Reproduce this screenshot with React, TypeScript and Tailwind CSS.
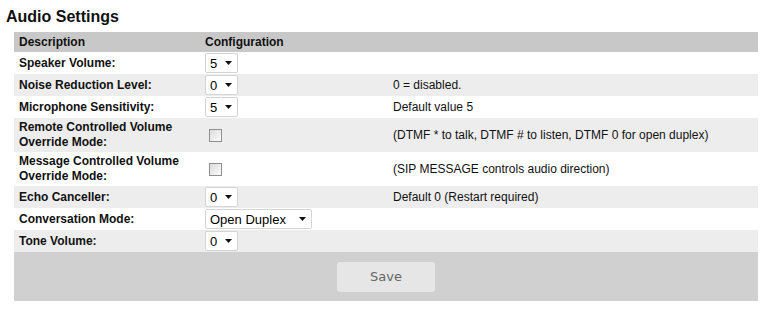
import React from 'react'

type Row = {
  label: string
  control: 'select' | 'checkbox'
  value?: string
  wide?: boolean
  note?: string
  tall?: boolean
}

const ROWS: Row[] = [
  { label: 'Speaker Volume:', control: 'select', value: '5' },
  { label: 'Noise Reduction Level:', control: 'select', value: '0', note: '0 = disabled.' },
  { label: 'Microphone Sensitivity:', control: 'select', value: '5', note: 'Default value 5' },
  {
    label: 'Remote Controlled Volume Override Mode:',
    control: 'checkbox',
    tall: true,
    note: '(DTMF * to talk, DTMF # to listen, DTMF 0 for open duplex)',
  },
  {
    label: 'Message Controlled Volume Override Mode:',
    control: 'checkbox',
    tall: true,
    note: '(SIP MESSAGE controls audio direction)',
  },
  { label: 'Echo Canceller:', control: 'select', value: '0', note: 'Default 0 (Restart required)' },
  { label: 'Conversation Mode:', control: 'select', value: 'Open Duplex', wide: true },
  { label: 'Tone Volume:', control: 'select', value: '0' },
]

function FakeSelect({ value, wide }: { value: string; wide?: boolean }) {
  return (
    <div
      className={`flex items-center justify-between h-[20px] bg-white border border-[#d4d4d4] rounded-[2px] pl-[4px] pr-[5px] text-[13px] text-black ${
        wide ? 'w-[107px]' : 'w-[33px]'
      }`}
    >
      <span className="leading-none">{value}</span>
      <svg className="w-[7px] h-[4px]" viewBox="0 0 7 4">
        <path d="M0 0h7L3.5 4z" fill="#111" />
      </svg>
    </div>
  )
}

function FakeCheckbox() {
  return (
    <span className="ml-[4px] block w-[13px] h-[13px] border border-[#8f8f8f] bg-gradient-to-br from-[#dcdcdc] to-[#fbfbfb]" />
  )
}

export default function App() {
  return (
    <div className="w-[767px] h-[312px] bg-white font-['Liberation_Sans',Arial,sans-serif]">
      <h1 className="pl-[6px] pt-[8px] mb-[6px] text-[16px] leading-[18px] font-bold text-[#111]">
        Audio Settings
      </h1>

      <div className="ml-[14px] w-[744px] text-[12px] text-[#111]">
        {/* Cabeçalho */}
        <div className="grid grid-cols-[186px_188px_1fr] h-[20px] items-center bg-[#c8c8c8] font-bold">
          <div className="px-[5px]">Description</div>
          <div className="px-[5px]">Configuration</div>
          <div />
        </div>

        {ROWS.map((row, i) => (
          <div
            key={row.label}
            className={`grid grid-cols-[186px_188px_1fr] items-center ${
              row.tall ? 'h-[34px]' : 'h-[22px]'
            } ${i % 2 === 1 ? 'bg-[#ededed]' : 'bg-white'}`}
          >
            <div className="px-[5px] font-bold leading-[15px]">{row.label}</div>
            <div className="px-[5px]">
              {row.control === 'select' ? (
                <FakeSelect value={row.value ?? ''} wide={row.wide} />
              ) : (
                <FakeCheckbox />
              )}
            </div>
            <div className="px-[5px]">{row.note}</div>
          </div>
        ))}

        {/* Salvar */}
        <div className="flex items-center justify-center h-[49px] bg-[#d1d0d0] pt-[1px]">
          <button
            type="button"
            className="w-[98px] h-[30px] rounded-[3px] bg-[#e6e6e6] text-[#666] text-[13px] font-['DejaVu_Sans',Verdana,sans-serif]"
          >
            Save
          </button>
        </div>
      </div>
    </div>
  )
}
